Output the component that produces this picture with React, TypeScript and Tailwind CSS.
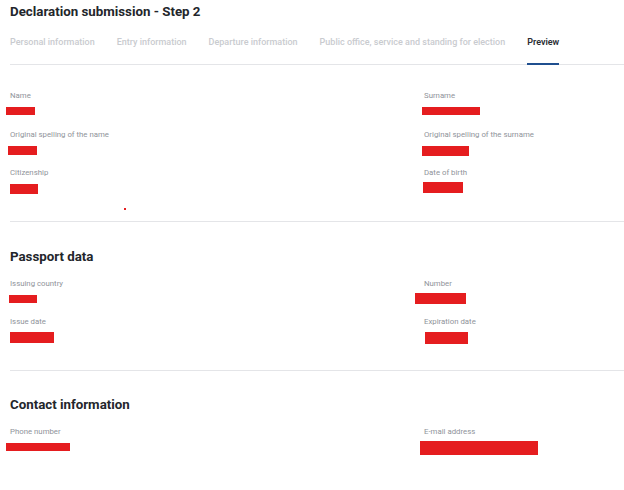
import React from 'react';

type Field = {
  label: string;
  // redaction box over the value: offset from the column edge, width, height, top gap
  x: number;
  w: number;
  h: number;
  top: number;
};

const personal: Field[][] = [
  [
    { label: 'Name', x: -4, w: 29, h: 8, top: 6 },
    { label: 'Surname', x: -2, w: 58, h: 8, top: 6 },
  ],
  [
    { label: 'Original spelling of the name', x: -2, w: 29, h: 9, top: 6 },
    { label: 'Original spelling of the surname', x: -2, w: 47, h: 10, top: 6 },
  ],
  [
    { label: 'Citizenship', x: 0, w: 28, h: 10, top: 6 },
    { label: 'Date of birth', x: -1, w: 40, h: 11, top: 4 },
  ],
];

const passport: Field[][] = [
  [
    { label: 'Issuing country', x: -1, w: 28, h: 8, top: 6 },
    { label: 'Number', x: -9, w: 51, h: 11, top: 4 },
  ],
  [
    { label: 'Issue date', x: 0, w: 44, h: 11, top: 4.5 },
    { label: 'Expiration date', x: 1, w: 43, h: 12, top: 4.5 },
  ],
];

const contact: Field[][] = [
  [
    { label: 'Phone number', x: -4, w: 64, h: 8, top: 6 },
    { label: 'E-mail address', x: -4, w: 118, h: 14, top: 4 },
  ],
];

const tabs = [
  'Personal information',
  'Entry information',
  'Departure information',
  'Public office, service and standing for election',
];

function FieldCell({ field }: { field: Field }) {
  return (
    <div className="h-[38.5px]">
      <div className="text-[7.8px] leading-[10px] text-[#8f939a]">{field.label}</div>
      {/* redacted value */}
      <div
        className="bg-[#e51d1f]"
        style={{ marginLeft: field.x, width: field.w, height: field.h, marginTop: field.top }}
      />
    </div>
  );
}

function FieldGrid({ rows }: { rows: Field[][] }) {
  return (
    <div className="grid grid-cols-[414px_1fr]">
      {rows.map((row, i) => (
        <React.Fragment key={i}>
          <FieldCell field={row[0]} />
          <FieldCell field={row[1]} />
        </React.Fragment>
      ))}
    </div>
  );
}

export default function App() {
  return (
    <div className="w-[624px] h-[490px] overflow-hidden bg-white pl-[10px] font-['Roboto',sans-serif] text-[#23262b]">
      <h1 className="pt-[4px] text-[13.3px] leading-[16px] font-bold">Declaration submission - Step 2</h1>

      <div className="mt-[16px] flex gap-[22px] border-b border-[#e4e5e8]">
        {tabs.map((t) => (
          <div key={t} className="pb-[14px] text-[9px] leading-[12px] font-medium text-[#c9cbcf] border-b-2 border-transparent">
            {t}
          </div>
        ))}
        <div className="pb-[14px] text-[9px] leading-[12px] font-semibold text-[#2a2d33] border-b-2 border-[#1f4f8f] -mb-px">
          Preview
        </div>
      </div>

      <div className="pt-[26px]">
        <FieldGrid rows={personal} />
        <div className="mt-[1px] ml-[114px] h-[2px] w-[2px] bg-[#e51d1f]" />
      </div>

      <div className="mt-[11px] border-t border-[#e4e5e8]">
        <h2 className="mt-[27px] text-[13.3px] leading-[16px] font-bold">Passport data</h2>
        <div className="mt-[14px]">
          <FieldGrid rows={passport} />
        </div>
      </div>

      <div className="mt-[14px] border-t border-[#e4e5e8]">
        <h2 className="mt-[26px] text-[13.3px] leading-[16px] font-bold">Contact information</h2>
        <div className="mt-[14px]">
          <FieldGrid rows={contact} />
        </div>
      </div>
    </div>
  );
}
